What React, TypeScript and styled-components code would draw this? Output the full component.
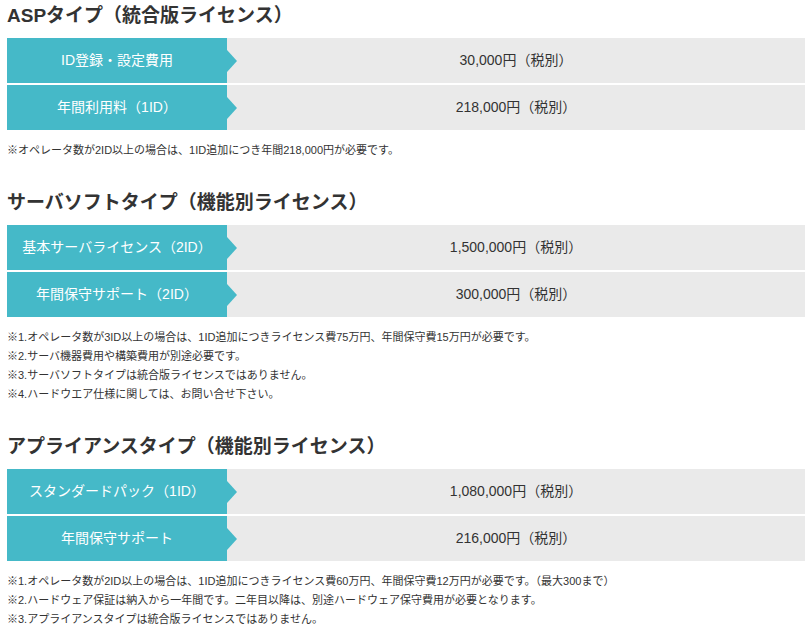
import React from 'react';
import styled, { createGlobalStyle } from 'styled-components';

const GlobalStyle = createGlobalStyle`
  body {
    margin: 0;
    background: #fff;
    color: #333;
    font-family: "Liberation Sans", "Noto Sans CJK JP", sans-serif;
  }
`;

const Page = styled.div`
  padding: 1px 6px 0 7px;
  display: flex;
  flex-direction: column;
  gap: 28px;
`;

const Section = styled.section`
  display: flex;
  flex-direction: column;
`;

const Heading = styled.h2`
  margin: 0 0 9px;
  padding-top: 2px;
  font-size: 19px;
  line-height: 26px;
  font-weight: 700;
  color: #333;
`;

const PriceTable = styled.div`
  display: flex;
  flex-direction: column;
  gap: 2px;
`;

const Row = styled.div`
  display: grid;
  grid-template-columns: 220px 1fr;
  height: 45px;
`;

const Label = styled.div`
  position: relative;
  background: #45b9c8;
  color: #fff;
  font-size: 14px;
  line-height: 20px;
  padding-bottom: 2px;
  display: flex;
  align-items: center;
  justify-content: center;

  &::after {
    content: '';
    position: absolute;
    left: 100%;
    top: 50%;
    margin-top: -11px;
    border-style: solid;
    border-width: 11px 0 11px 10px;
    border-color: transparent transparent transparent #45b9c8;
  }
`;

const Price = styled.div`
  background: #eaeaea;
  color: #333;
  font-size: 14px;
  line-height: 20px;
  padding-bottom: 2px;
  display: flex;
  align-items: center;
  justify-content: center;
`;

const Notes = styled.ul`
  list-style: none;
  margin: 11px 0 0;
  padding: 0;
  font-size: 11px;
  line-height: 19px;
  color: #333;
`;

type Item = { label: string; price: string };
type Block = { title: string; items: Item[]; notes: string[] };

const blocks: Block[] = [
  {
    title: 'ASPタイプ（統合版ライセンス）',
    items: [
      { label: 'ID登録・設定費用', price: '30,000円（税別）' },
      { label: '年間利用料（1ID）', price: '218,000円（税別）' },
    ],
    notes: ['※オペレータ数が2ID以上の場合は、1ID追加につき年間218,000円が必要です。'],
  },
  {
    title: 'サーバソフトタイプ（機能別ライセンス）',
    items: [
      { label: '基本サーバライセンス（2ID）', price: '1,500,000円（税別）' },
      { label: '年間保守サポート（2ID）', price: '300,000円（税別）' },
    ],
    notes: [
      '※1.オペレータ数が3ID以上の場合は、1ID追加につきライセンス費75万円、年間保守費15万円が必要です。',
      '※2.サーバ機器費用や構築費用が別途必要です。',
      '※3.サーバソフトタイプは統合版ライセンスではありません。',
      '※4.ハードウエア仕様に関しては、お問い合せ下さい。',
    ],
  },
  {
    title: 'アプライアンスタイプ（機能別ライセンス）',
    items: [
      { label: 'スタンダードパック（1ID）', price: '1,080,000円（税別）' },
      { label: '年間保守サポート', price: '216,000円（税別）' },
    ],
    notes: [
      '※1.オペレータ数が2ID以上の場合は、1ID追加につきライセンス費60万円、年間保守費12万円が必要です。（最大300まで）',
      '※2.ハードウェア保証は納入から一年間です。二年目以降は、別途ハードウェア保守費用が必要となります。',
      '※3.アプライアンスタイプは統合版ライセンスではありません。',
    ],
  },
];

export default function App() {
  return (
    <>
      <GlobalStyle />
      <Page>
        {blocks.map((b) => (
          <Section key={b.title}>
            <Heading>{b.title}</Heading>
            <PriceTable>
              {b.items.map((it) => (
                <Row key={it.label}>
                  <Label>{it.label}</Label>
                  <Price>{it.price}</Price>
                </Row>
              ))}
            </PriceTable>
            <Notes>
              {b.notes.map((n) => (
                <li key={n}>{n}</li>
              ))}
            </Notes>
          </Section>
        ))}
      </Page>
    </>
  );
}
